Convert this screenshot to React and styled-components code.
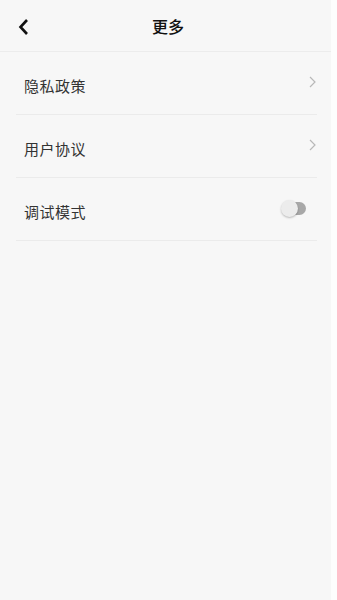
import styled, { createGlobalStyle } from "styled-components";

const GlobalStyle = createGlobalStyle`
  html, body {
    margin: 0;
    padding: 0;
    background: #fdfdfd;
  }
  body {
    font-family: "Noto Sans CJK SC", "Noto Sans", sans-serif;
  }
`;

const Page = styled.div`
  width: 331px;
  height: 600px;
  background: #f7f7f7;
  display: flex;
  flex-direction: column;
`;

const Header = styled.header`
  height: 52px;
  display: grid;
  grid-template-columns: 48px 1fr 48px;
  align-items: center;
  border-bottom: 1px solid #ececec;
  box-sizing: border-box;
`;

const BackButton = styled.span`
  display: flex;
  align-items: center;
  justify-content: center;
  width: 40px;
  height: 40px;
  margin-left: 4px;
  margin-top: 2px;
`;

const Title = styled.h1`
  margin: 0;
  text-align: center;
  font-size: 16px;
  font-weight: 500;
  color: #111;
  padding-left: 5px;
`;

const List = styled.div`
  display: flex;
  flex-direction: column;
  padding: 0 14px 0 16px;
`;

const Row = styled.div`
  height: 63px;
  display: flex;
  align-items: center;
  justify-content: space-between;
  border-bottom: 1px solid #ebebeb;
  padding: 4px 0 0 8px;
  box-sizing: border-box;
`;

const Label = styled.span`
  font-size: 15px;
  color: #333;
  letter-spacing: 0.5px;
`;

const ChevronIcon = styled.svg`
  margin-top: -6px;
`;

const Toggle = styled.span`
  position: relative;
  width: 25px;
  height: 17px;
  margin-right: 11px;
  margin-top: -5px;
  display: inline-block;

  &::before {
    content: "";
    position: absolute;
    right: 0;
    top: 2px;
    width: 20px;
    height: 13px;
    border-radius: 7px;
    background: #a8a8a8;
  }
  &::after {
    content: "";
    position: absolute;
    left: 0;
    top: 0;
    width: 17px;
    height: 17px;
    border-radius: 50%;
    background: #ececec;
    box-shadow: 0 1px 2px rgba(0, 0, 0, 0.25);
  }
`;

const Chevron = () => (
  <ChevronIcon width="10" height="14" viewBox="0 0 10 14">
    <path d="M3 2 L8 7 L3 12" fill="none" stroke="#b8b8b8" strokeWidth="1.2" />
  </ChevronIcon>
);

const items = [
  { label: "隐私政策", type: "link" },
  { label: "用户协议", type: "link" },
  { label: "调试模式", type: "switch" },
];

export default function App() {
  return (
    <>
      <GlobalStyle />
      <Page>
        <Header>
          <BackButton>
            <svg width="14" height="18" viewBox="0 0 14 18">
              <path d="M10 2 L3.5 9 L10 16" fill="none" stroke="#111" strokeWidth="2.6" />
            </svg>
          </BackButton>
          <Title>更多</Title>
          <span />
        </Header>
        <List>
          {items.map((it) => (
            <Row key={it.label}>
              <Label>{it.label}</Label>
              {it.type === "link" ? <Chevron /> : <Toggle />}
            </Row>
          ))}
        </List>
      </Page>
    </>
  );
}
